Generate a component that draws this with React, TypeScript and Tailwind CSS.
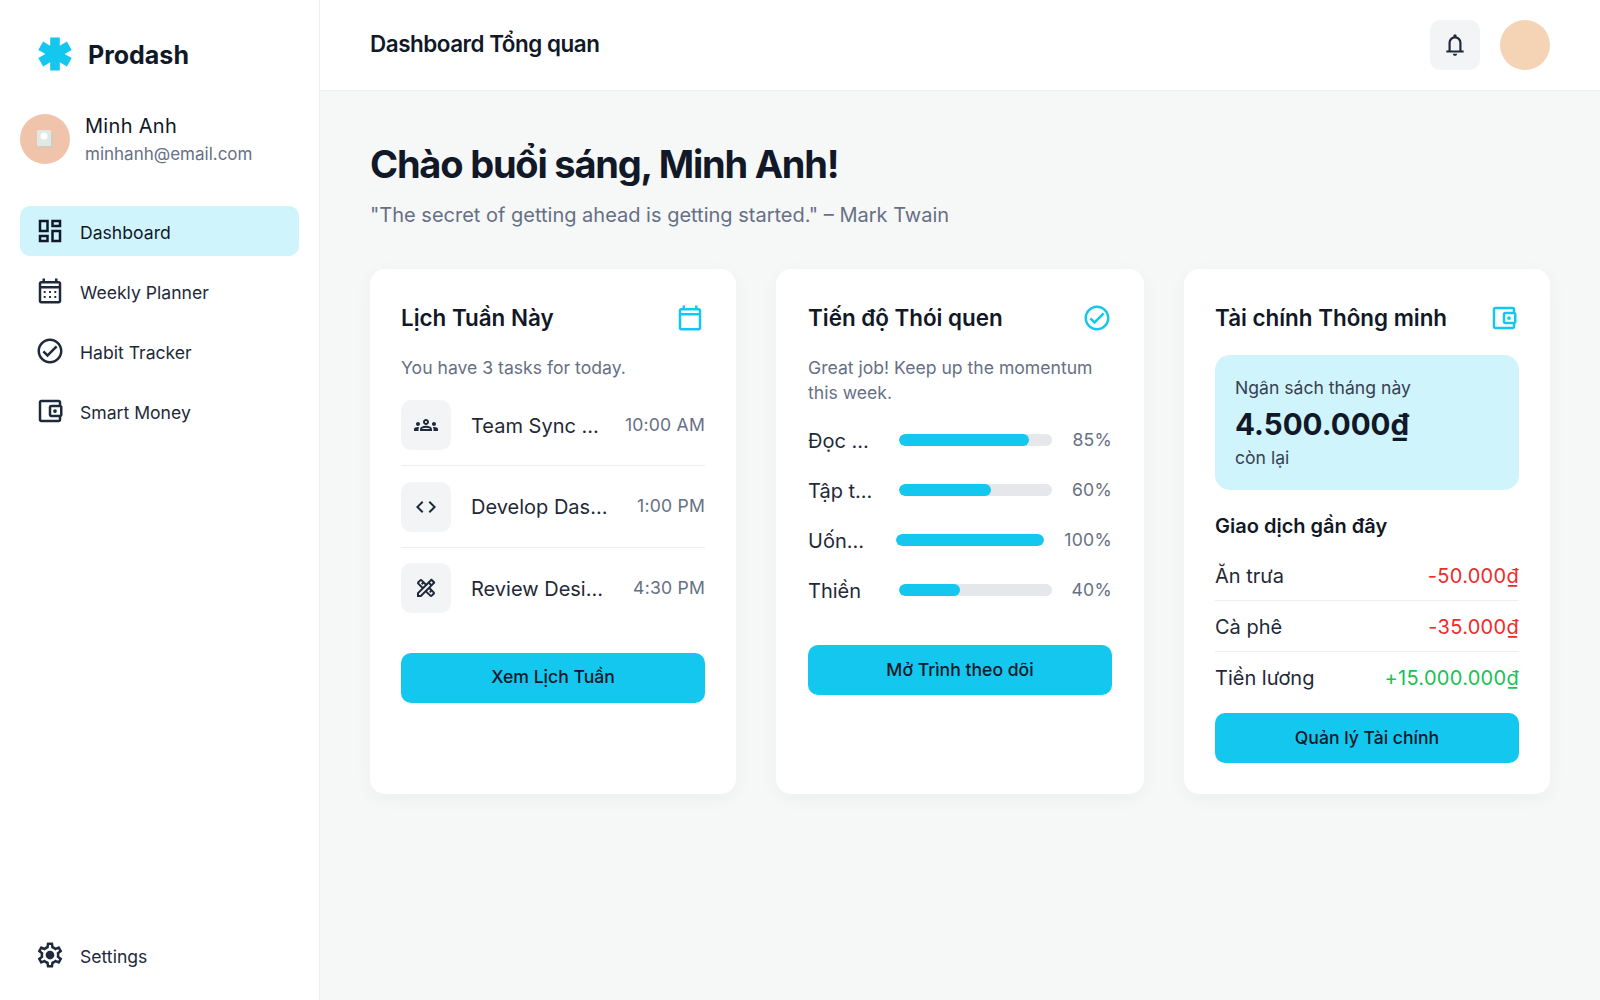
import React from 'react';

const icons = {
    dashboard: 'M19 5v2h-4V5h4M9 5v6H5V5h4m10 8v6h-4v-6h4M9 17v2H5v-2h4M21 3h-8v6h8V3zM11 3H3v10h8V3zm10 8h-8v10h8V11zm-10 4H3v6h8v-6z',
    calendarMonth: 'M19 4h-1V2h-2v2H8V2H6v2H5c-1.1 0-2 .9-2 2v14c0 1.1.9 2 2 2h14c1.1 0 2-.9 2-2V6c0-1.1-.9-2-2-2zm0 16H5V10h14v10zm0-12H5V6h14v2zM8.5 13.5h-1.5v-1.5h1.5v1.5zm4.25 0h-1.5v-1.5h1.5v1.5zm4.25 0h-1.5v-1.5h1.5v1.5zm-8.5 4h-1.5v-1.5h1.5v1.5zm4.25 0h-1.5v-1.5h1.5v1.5zm4.25 0h-1.5v-1.5h1.5v1.5z',
    calendarEmpty: 'M19 4h-1V2h-2v2H8V2H6v2H5c-1.1 0-2 .9-2 2v14c0 1.1.9 2 2 2h14c1.1 0 2-.9 2-2V6c0-1.1-.9-2-2-2zm0 16H5V10h14v10zm0-12H5V6h14v2z',
    check: 'M12 2C6.48 2 2 6.48 2 12s4.48 10 10 10 10-4.48 10-10S17.52 2 12 2zm0 18c-4.41 0-8-3.59-8-8s3.59-8 8-8 8 3.59 8 8-3.59 8-8 8zm4.59-12.42L10 14.17l-2.59-2.58L6 13l4 4 8-8z',
    wallet: 'M21 7.28V5c0-1.1-.9-2-2-2H5c-1.11 0-2 .9-2 2v14c0 1.1.89 2 2 2h14c1.1 0 2-.9 2-2v-2.28c.59-.35 1-.98 1-1.72V9c0-.74-.41-1.38-1-1.72zM20 9v6h-7V9h7zM5 19V5h14v2h-6c-1.1 0-2 .9-2 2v6c0 1.1.9 2 2 2h6v2H5z M16 10.5a1.5 1.5 0 1 0 0 3a1.5 1.5 0 1 0 0-3z',
    settings: 'M19.43 12.98c.04-.32.07-.64.07-.98 0-.34-.03-.66-.07-.98l2.11-1.65c.19-.15.24-.42.12-.64l-2-3.46c-.09-.16-.26-.25-.44-.25-.06 0-.12.01-.17.03l-2.49 1c-.52-.4-1.08-.73-1.69-.98l-.38-2.65C14.46 2.18 14.25 2 14 2h-4c-.25 0-.46.18-.49.42l-.38 2.65c-.61.25-1.17.59-1.69.98l-2.49-1c-.06-.02-.12-.03-.18-.03-.17 0-.34.09-.43.25l-2 3.46c-.13.22-.07.49.12.64l2.11 1.65c-.04.32-.07.65-.07.98 0 .33.03.66.07.98l-2.11 1.65c-.19.15-.24.42-.12.64l2 3.46c.09.16.26.25.44.25.06 0 .12-.01.17-.03l2.49-1c.52.4 1.08.73 1.69.98l.38 2.65c.03.24.24.42.49.42h4c.25 0 .46-.18.49-.42l.38-2.65c.61-.25 1.17-.59 1.69-.98l2.49 1c.06.02.12.03.18.03.17 0 .34-.09.43-.25l2-3.46c.12-.22.07-.49-.12-.64l-2.11-1.65zm-1.98-1.71c.04.31.05.52.05.73 0 .21-.02.43-.05.73l-.14 1.13.89.7 1.08.84-.7 1.21-1.27-.51-1.04-.42-.9.68c-.43.32-.84.56-1.25.73l-1.06.43-.16 1.13-.2 1.35h-1.4l-.19-1.35-.16-1.13-1.06-.43c-.43-.18-.83-.41-1.23-.71l-.91-.7-1.06.43-1.27.51-.7-1.21 1.08-.84.89-.7-.14-1.13c-.03-.31-.05-.54-.05-.74s.02-.43.05-.73l.14-1.13-.89-.7-1.08-.84.7-1.21 1.27.51 1.04.42.9-.68c.43-.32.84-.56 1.25-.73l1.06-.43.16-1.13.2-1.35h1.39l.19 1.35.16 1.13 1.06.43c.43.18.83.41 1.23.71l.91.7 1.06-.43 1.27-.51.7 1.21-1.07.85-.89.7.14 1.13zM12 8.5a3.5 3.5 0 1 0 0 7a3.5 3.5 0 1 0 0-7z',
    bell: 'M4 19v-2h2v-7q0-2.075 1.25-3.687T10.5 4.2v-.7q0-.625.438-1.062T12 2q.625 0 1.063.438T13.5 3.5v.7q2 .5 3.25 2.113T18 10v7h2v2H4Zm8 3q-.825 0-1.412-.587T10 20h4q0 .825-.587 1.413T12 22Zm-4-5h8v-7q0-1.65-1.175-2.825T12 6q-1.65 0-2.825 1.175T8 10v7Z',
    groups: 'M4 13c1.1 0 2-.9 2-2s-.9-2-2-2-2 .9-2 2 .9 2 2 2zm1.13 1.1c-.37-.06-.74-.1-1.13-.1-.99 0-1.93.21-2.78.58C.48 14.9 0 15.62 0 16.43V18h4.5v-1.61c0-.83.23-1.61.63-2.29zM20 13c1.1 0 2-.9 2-2s-.9-2-2-2-2 .9-2 2 .9 2 2 2zm4 3.43c0-.81-.48-1.53-1.22-1.85-.85-.37-1.79-.58-2.78-.58-.39 0-.76.04-1.13.1.4.68.63 1.46.63 2.29V18H24v-1.57zm-7.76-2.78c-1.17-.52-2.61-.9-4.24-.9-1.63 0-3.07.39-4.24.9C6.68 14.13 6 15.21 6 16.39V18h12v-1.61c0-1.18-.68-2.26-1.76-2.74zM8.07 16c.09-.23.13-.39.91-.69.97-.38 1.99-.56 3.02-.56s2.05.18 3.02.56c.77.3.81.46.91.69H8.07zM12 8c.55 0 1 .45 1 1s-.45 1-1 1-1-.45-1-1 .45-1 1-1m0-2c-1.66 0-3 1.34-3 3s1.34 3 3 3 3-1.34 3-3-1.34-3-3-3z',
    code: 'M9.4 16.6L4.8 12l4.6-4.6L8 6l-6 6 6 6 1.4-1.4zm5.2 0l4.6-4.6-4.6-4.6L16 6l6 6-6 6-1.4-1.4z',
    design: 'M20.97 7.27c.39-.39.39-1.02 0-1.41l-2.83-2.83c-.39-.39-1.02-.39-1.41 0l-4.49 4.49-3.89-3.89c-.78-.78-2.05-.78-2.83 0l-1.9 1.9c-.78.78-.78 2.05 0 2.83l3.89 3.89L3 16.76V21h4.24l4.52-4.52 3.89 3.89c.95.95 2.23.6 2.83 0l1.9-1.9c.78-.78.78-2.05 0-2.83l-3.89-3.89 4.48-4.48zM5.04 6.94l1.89-1.9L8.2 6.31 7.02 7.5l1.41 1.41 1.19-1.19 1.2 1.2-1.9 1.9-3.88-3.88zm11.23 7.5-1.19 1.19 1.41 1.41 1.19-1.19 1.27 1.27-1.9 1.9-3.89-3.89 1.9-1.9 1.21 1.21zM6.41 19H5v-1.41l9.61-9.61 1.3 1.3.11.11L6.41 19zm9.61-12.44 1.41-1.41 1.41 1.41-1.41 1.41-1.41-1.41z',
};

const Icon = ({ d, className }: { d: string; className: string }) => (
    <svg viewBox="0 0 24 24" fill="currentColor" className={className}>
        <path d={d} />
    </svg>
);

const NavItem = ({ icon, label, active }: { icon: string; label: string; active?: boolean }) => (
    <div className={`flex h-[50px] items-center gap-[15px] rounded-[10px] px-[15px] ${active ? 'bg-[#cff4fc] text-[#111827]' : 'text-[#1e293b]'}`}>
        <Icon d={icon} className="h-[30px] w-[30px] shrink-0" />
        <span className="pt-[3px] text-[17.6px] leading-none">{label}</span>
    </div>
);

const Card = ({ title, icon, className, children }: { title: string; icon: string; className?: string; children: React.ReactNode }) => (
    <div className={`flex flex-col rounded-[15px] bg-white py-[31px] shadow-[0_4px_20px_rgba(0,0,0,0.04)] ${className ?? 'px-[31px]'}`}>
        <div className="mb-[20px] flex h-[35px] items-center justify-between">
            <h3 className="text-[22.4px] font-semibold text-[#111827]">{title}</h3>
            <Icon d={icon} className="h-[30px] w-[30px] text-[#13c7ef]" />
        </div>
        {children}
    </div>
);

const ActionButton = ({ label, className }: { label: string; className?: string }) => (
    <button className={`h-[50px] w-full shrink-0 rounded-[10px] bg-[#13c7ef] text-[17.6px] font-medium text-[#111827] ${className ?? ''}`}>
        {label}
    </button>
);

const tasks = [
    { icon: icons.groups, title: 'Team Sync Meeting', time: '10:00 AM' },
    { icon: icons.code, title: 'Develop Dashboard', time: '1:00 PM' },
    { icon: icons.design, title: 'Review Design', time: '4:30 PM' },
];

const habits = [
    { name: 'Đọc sách', pct: 85, barClass: 'ml-[25px]' },
    { name: 'Tập thể dục', pct: 60, barClass: 'ml-[25px]' },
    { name: 'Uống nước', pct: 100, barClass: 'ml-[22px]' },
    { name: 'Thiền', pct: 40, barClass: 'ml-[25px]' },
];

const transactions = [
    { name: 'Ăn trưa', amount: '-50.000₫', color: 'text-[#ef2b2b]' },
    { name: 'Cà phê', amount: '-35.000₫', color: 'text-[#ef2b2b]' },
    { name: 'Tiền lương', amount: '+15.000.000₫', color: 'text-[#18c254]' },
];

export default function App() {
    return (
        <div className="flex h-[1000px] w-[1600px] overflow-hidden bg-[#f6f7f7] font-['Inter',sans-serif] text-[#111827]">
            <aside className="flex w-[320px] shrink-0 flex-col border-r border-[#eceeef] bg-white p-[20px]">
                <div className="flex h-[68px] items-center gap-[15px] pl-[17px]">
                    <svg viewBox="0 0 24 24" className="h-[36px] w-[36px] text-[#13c7ef]" fill="currentColor">
                        <path d="M8.8 1H15.2V6.46L19.93 3.73L23.13 9.27L18.4 12L23.13 14.73L19.93 20.27L15.2 17.54V23H8.8V17.54L4.07 20.27L.87 14.73L5.6 12L.87 9.27L4.07 3.73L8.8 6.46Z" />
                    </svg>
                    <span className="pt-[4px] text-[25px] font-bold text-[#111827]">Prodash</span>
                </div>
                <div className="mt-[26px] flex h-[50px] items-center gap-[15px]">
                    <div className="flex h-[50px] w-[50px] items-center justify-center rounded-full bg-[#f0c4aa]">
                        <svg viewBox="0 0 18 20" className="h-[20px] w-[18px]">
                            <rect x="3" y="3" width="14" height="16" rx="1" fill="#d9c9bd" />
                            <rect x="1" y="1" width="14" height="16" rx="1" fill="#dfe8e4" />
                            <circle cx="8" cy="7" r="3.5" fill="#ffffff" />
                        </svg>
                    </div>
                    <div className="flex flex-col pt-[1px]">
                        <span className="text-[20px] leading-[28px] tracking-[0.3px] text-[#111827]">Minh Anh</span>
                        <span className="text-[17px] leading-[28px] text-[#667085]">minhanh@email.com</span>
                    </div>
                </div>
                <nav className="mt-[42px] flex flex-col gap-[10px]">
                    <NavItem icon={icons.dashboard} label="Dashboard" active />
                    <NavItem icon={icons.calendarMonth} label="Weekly Planner" />
                    <NavItem icon={icons.check} label="Habit Tracker" />
                    <NavItem icon={icons.wallet} label="Smart Money" />
                </nav>
                <div className="mt-auto">
                    <NavItem icon={icons.settings} label="Settings" />
                </div>
            </aside>

            <div className="flex min-w-0 flex-1 flex-col">
                <header className="flex h-[91px] shrink-0 items-center justify-between border-b border-[#eceeef] bg-white px-[50px]">
                    <h2 className="pb-[2px] text-[22.4px] font-semibold tracking-[-0.45px] text-[#111827]">Dashboard Tổng quan</h2>
                    <div className="flex items-center gap-[20px]">
                        <div className="flex h-[50px] w-[50px] items-center justify-center rounded-[10px] bg-[#f3f4f6]">
                            <Icon d={icons.bell} className="h-[26px] w-[26px] text-[#1e293b]" />
                        </div>
                        <div className="h-[50px] w-[50px] rounded-full bg-[#f5d3b5]" />
                    </div>
                </header>

                <main className="flex-1 px-[50px] pt-[50px]">
                    <h1 className="text-[38px] font-bold leading-[46px] tracking-[-1.2px] text-[#111827]">Chào buổi sáng, Minh Anh!</h1>
                    <p className="mt-[14px] text-[20px] leading-[28px] text-[#667085]">"The secret of getting ahead is getting started." – Mark Twain</p>

                    <div className="mt-[40px] grid grid-cols-[366px_368px_366px] gap-[40px]">
                        <Card title="Lịch Tuần Này" icon={icons.calendarEmpty}>
                            <p className="text-[17.6px] leading-[25px] text-[#667085]">You have 3 tasks for today.</p>
                            <div className="mt-[20px] flex flex-col">
                                {tasks.map((task, i) => (
                                    <div key={task.title} className={`flex items-center gap-[20px] ${i < 2 ? 'mb-[15.5px] border-b border-[#eceeef] pb-[15px]' : ''}`}>
                                        <div className="flex h-[50px] w-[50px] shrink-0 items-center justify-center rounded-[10px] bg-[#f3f4f6]">
                                            <Icon d={task.icon} className="h-[24px] w-[24px] text-[#1e293b]" />
                                        </div>
                                        <span className="mr-[6px] min-w-0 flex-1 truncate pt-[1px] text-[20px] text-[#1f2937]">{task.title}</span>
                                        <span className="shrink-0 text-[17.6px] tracking-[0.2px] text-[#667085]">{task.time}</span>
                                    </div>
                                ))}
                            </div>
                            <ActionButton label="Xem Lịch Tuần" className="mt-[39.5px]" />
                        </Card>

                        <Card title="Tiến độ Thói quen" icon={icons.check} className="px-[32px]">
                            <p className="text-[17.6px] leading-[25px] text-[#667085]">Great job! Keep up the momentum this week.</p>
                            <div className="mt-[22px] flex flex-col gap-[25px]">
                                {habits.map((habit) => (
                                    <div key={habit.name} className="flex h-[25px] items-center">
                                        <span className="w-[66px] shrink-0 truncate pt-[2px] text-[20px] text-[#1f2937]">{habit.name}</span>
                                        <div className={`${habit.barClass} h-[12px] min-w-0 flex-1 overflow-hidden rounded-full bg-[#e5e7eb]`}>
                                            <div className="h-full rounded-full bg-[#13c7ef]" style={{ width: `${habit.pct}%` }} />
                                        </div>
                                        <span className="ml-[20px] shrink-0 pt-[2px] text-[17.6px] tracking-[0.25px] text-[#667085]">{habit.pct}%</span>
                                    </div>
                                ))}
                            </div>
                            <ActionButton label="Mở Trình theo dõi" className="mt-[43px]" />
                        </Card>

                        <Card title="Tài chính Thông minh" icon={icons.wallet}>
                            <div className="rounded-[15px] bg-[#cff4fc] p-[20px]">
                                <p className="text-[17.6px] leading-[25px] text-[#374151]">Ngân sách tháng này</p>
                                <p className="pt-[3px] text-[29.6px] font-bold leading-[42px] text-[#111827]">4.500.000₫</p>
                                <p className="text-[17.6px] leading-[25px] text-[#374151]">còn lại</p>
                            </div>
                            <h4 className="mt-[21px] text-[20px] font-semibold leading-[30px] text-[#111827]">Giao dịch gần đây</h4>
                            <div className="mt-[9px] flex flex-col">
                                {transactions.map((tx, i) => (
                                    <div key={tx.name} className={`flex h-[51px] items-center justify-between pt-[1px] text-[20px] ${i < 2 ? 'border-b border-[#eceeef]' : ''}`}>
                                        <span className="text-[#1f2937]">{tx.name}</span>
                                        <span className={`${tx.color} tracking-[0.3px]`}>{tx.amount}</span>
                                    </div>
                                ))}
                            </div>
                            <ActionButton label="Quản lý Tài chính" className="mt-[10px]" />
                        </Card>
                    </div>
                </main>
            </div>
        </div>
    );
}
